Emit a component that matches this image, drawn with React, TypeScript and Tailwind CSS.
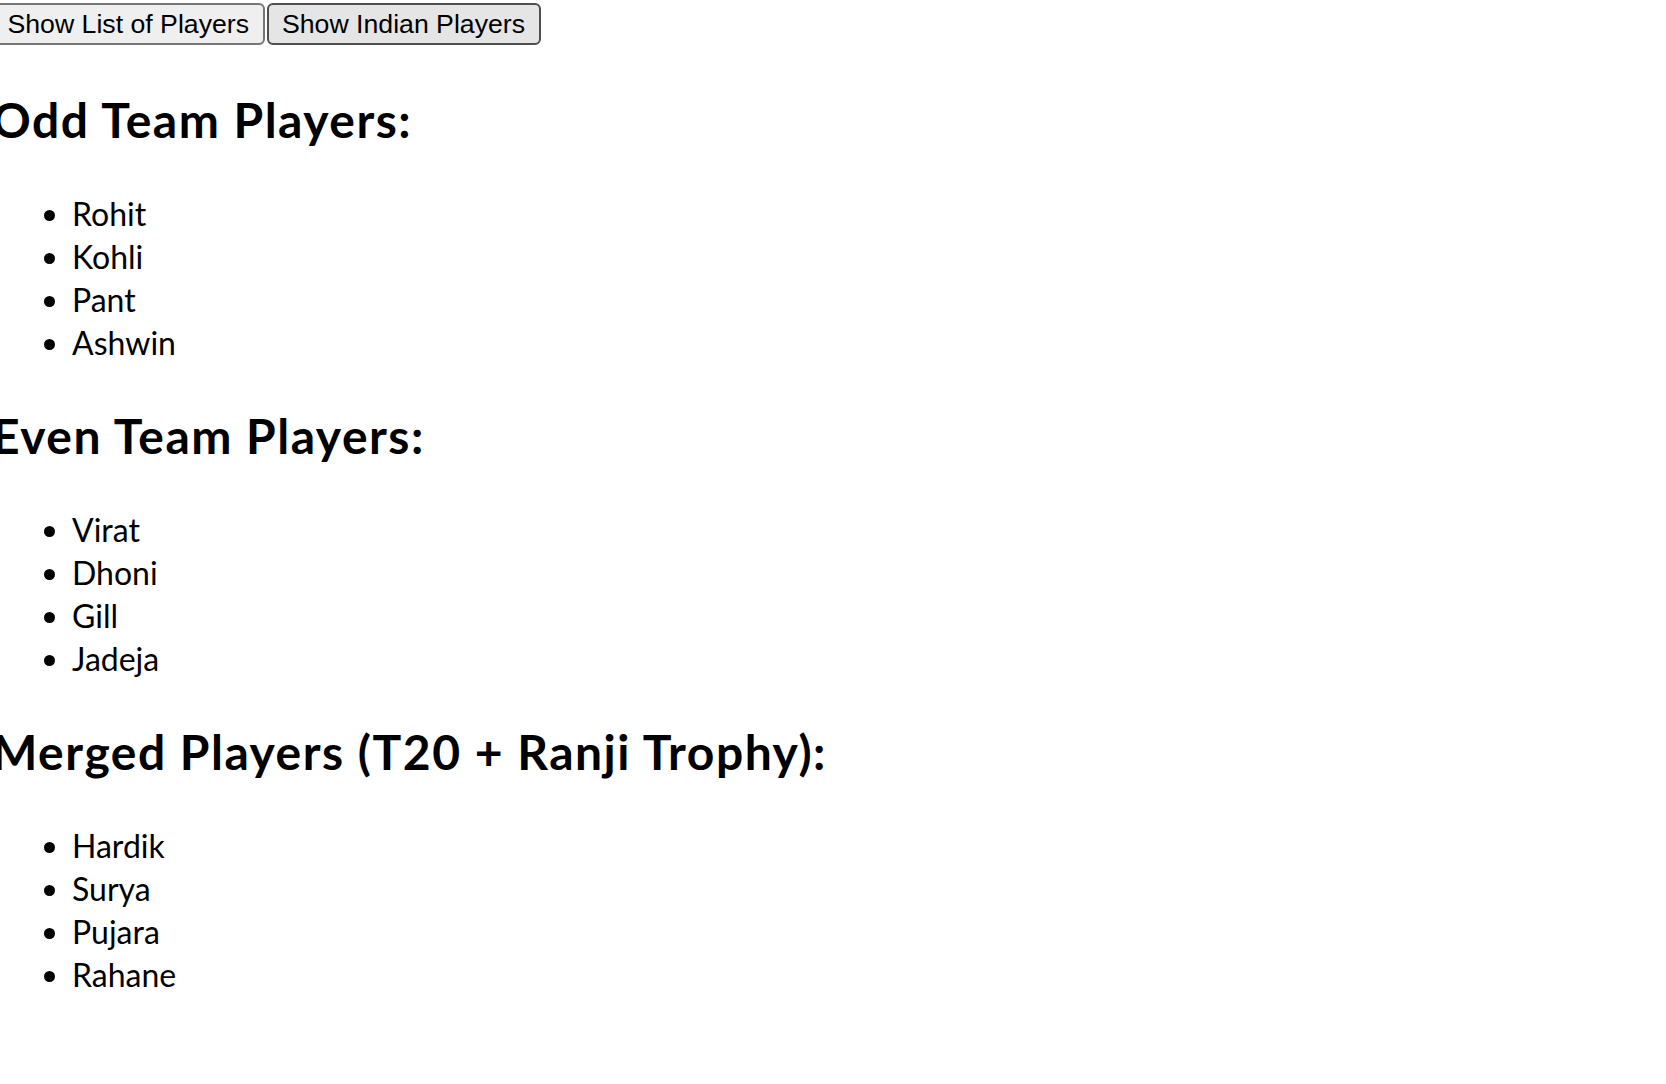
import React from 'react';

const oddTeam = ['Rohit', 'Kohli', 'Pant', 'Ashwin'];
const evenTeam = ['Virat', 'Dhoni', 'Gill', 'Jadeja'];
const merged = ['Hardik', 'Surya', 'Pujara', 'Rahane'];

function PlayerList({ title, players }: { title: string; players: string[] }) {
  return (
    <div>
      <h2 className="text-[48px] leading-[64px] font-bold tracking-[1.5px] mt-[40px] mb-[40px] text-black">{title}</h2>
      <ul className="list-disc pl-[80px] my-[32px] text-[32px] leading-[43px] text-black">
        {players.map((p) => (
          <li key={p}>{p}</li>
        ))}
      </ul>
    </div>
  );
}

export default function App() {
  return (
    <div className="min-h-screen bg-white -ml-2" style={{ fontFamily: 'Lato, "Open Sans", sans-serif' }}>
      {/* Buttons */}
      <div className="flex items-start gap-[2px] pt-[3px] h-[48px]">
        <button
          className="h-[42px] px-[13.5px] bg-[#efefef] border-2 border-[#767676] rounded-[6px] text-[26.67px] leading-none text-black"
          style={{ fontFamily: '"Liberation Sans", Arial, sans-serif' }}
        >
          Show List of Players
        </button>
        <button
          className="h-[42px] px-[13.5px] bg-[#e5e5e5] border-2 border-[#4f4f4f] rounded-[6px] text-[26.67px] leading-none text-black"
          style={{ fontFamily: '"Liberation Sans", Arial, sans-serif' }}
        >
          Show Indian Players
        </button>
      </div>

      <PlayerList title="Odd Team Players:" players={oddTeam} />
      <PlayerList title="Even Team Players:" players={evenTeam} />
      <PlayerList title="Merged Players (T20 + Ranji Trophy):" players={merged} />
    </div>
  );
}
